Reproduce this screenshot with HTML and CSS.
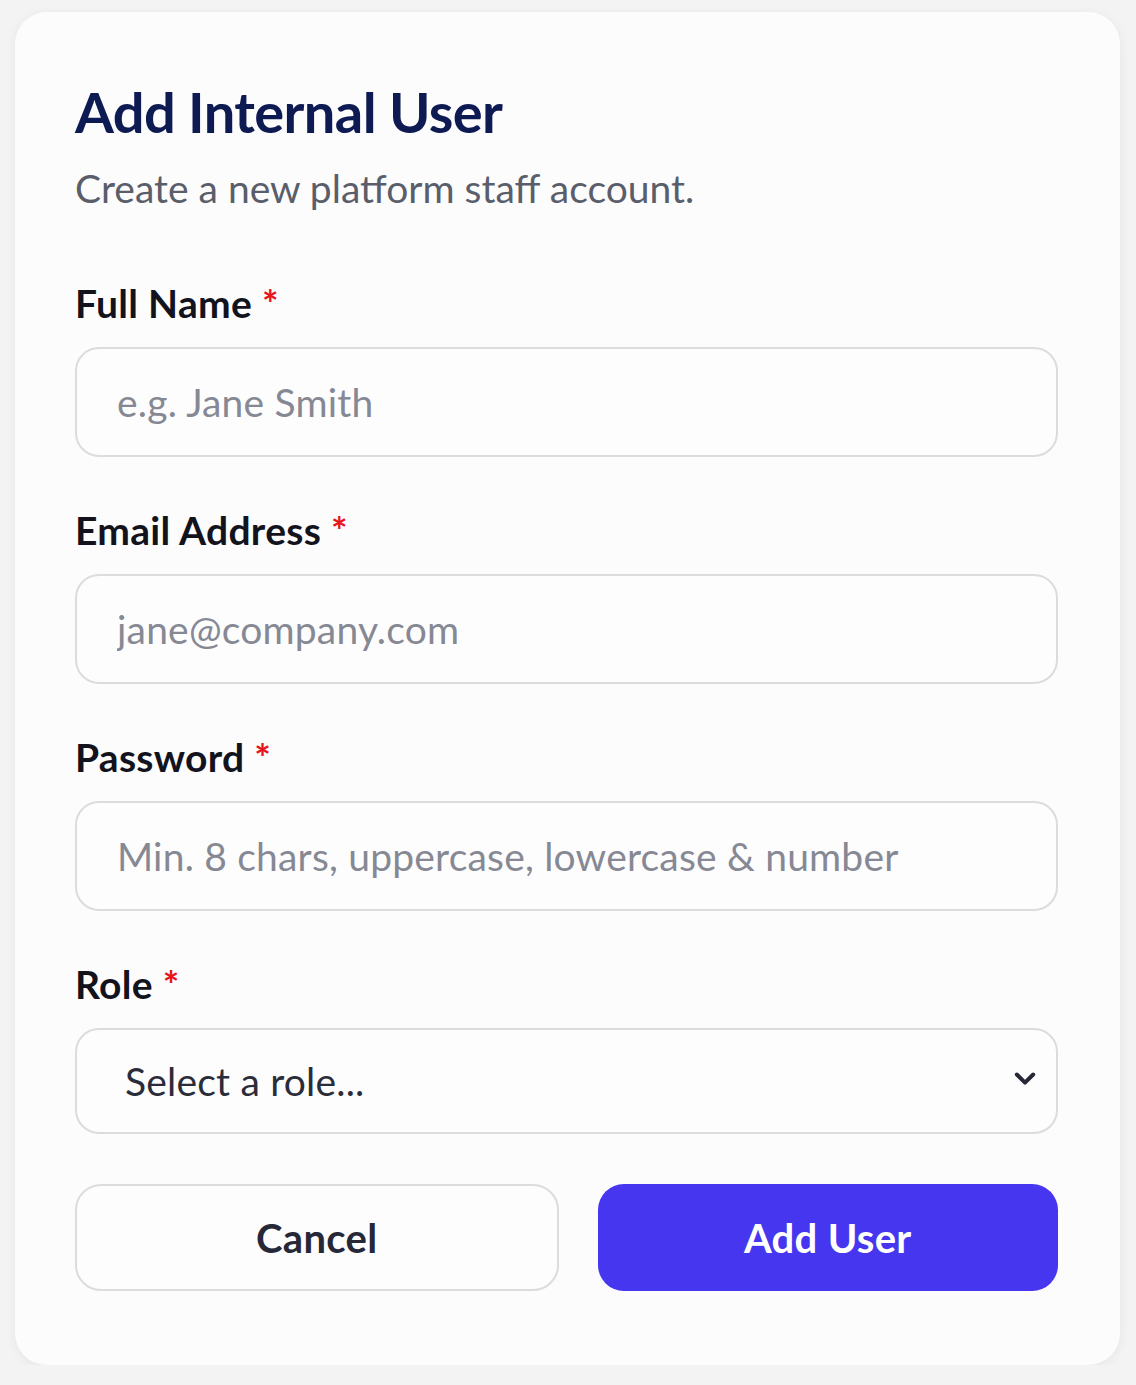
FILE: index.html
```html
<!DOCTYPE html>
<html lang="en">
<head>
  <meta charset="UTF-8">
  <meta name="viewport" content="width=device-width, initial-scale=1.0">
  <title>Add Internal User</title>
  <link rel="stylesheet" href="styles.css">
</head>
<body>

<div class="modal">
  <h1 class="modal-title">Add Internal User</h1>
  <p class="modal-subtitle">Create a new platform staff account.</p>

  <form class="user-form" onsubmit="return false">
    <!-- Full name -->
    <div class="field">
      <label class="field-label" for="fullName">Full Name <span class="required">*</span></label>
      <input class="field-input" id="fullName" type="text" placeholder="e.g. Jane Smith">
    </div>

    <!-- Email -->
    <div class="field">
      <label class="field-label" for="email">Email Address <span class="required">*</span></label>
      <input class="field-input" id="email" type="email" placeholder="jane@company.com">
    </div>

    <!-- Password -->
    <div class="field">
      <label class="field-label" for="password">Password <span class="required">*</span></label>
      <input class="field-input" id="password" type="password" placeholder="Min. 8 chars, uppercase, lowercase &amp; number">
    </div>

    <!-- Role -->
    <div class="field">
      <label class="field-label" for="role">Role <span class="required">*</span></label>
      <div class="select-wrap">
        <select class="field-input field-select" id="role">
          <option value="">Select a role...</option>
          <option value="admin">Admin</option>
          <option value="support">Support</option>
        </select>
        <svg class="select-arrow" viewBox="0 0 24 24" width="28" height="28" fill="none" stroke="#262838" stroke-width="3.4" stroke-linecap="round" stroke-linejoin="round">
          <path d="M5 9l7 7 7-7"/>
        </svg>
      </div>
    </div>

    <div class="actions">
      <button class="btn btn-cancel" type="button">Cancel</button>
      <button class="btn btn-primary" type="submit">Add User</button>
    </div>
  </form>
</div>

</body>
</html>
```

FILE: styles.css
```css
/* Base */
body {
  margin: 0;
  background: #f3f3f4;
  font-family: 'Lato', 'Inter', 'Liberation Sans', sans-serif;
}

/* Modal card */
.modal {
  margin: 12px 16px 0 15px;
  height: 1353px;
  box-sizing: border-box;
  background: #fcfcfd;
  border-radius: 32px;
  padding: 67px 62px 0 60px;
  box-shadow: 0 2px 12px rgba(0, 0, 0, 0.06);
}

.modal-title {
  margin: 0;
  font-size: 56px;
  line-height: 66px;
  font-weight: 700;
  color: #0e1b52;
  letter-spacing: -0.6px;
}

.modal-subtitle {
  margin: 20px 0 0;
  font-size: 39px;
  line-height: 46px;
  color: #5a5e6b;
}

/* Form */
.user-form {
  margin-top: 69px;
}

.field {
  margin-bottom: 50px;
}

.field-label {
  display: block;
  font-size: 39px;
  line-height: 46px;
  font-weight: 700;
  color: #12131c;
  margin-bottom: 21px;
  letter-spacing: 0.3px;
}

.required {
  color: #e8141c;
}

.field-input {
  display: block;
  width: 100%;
  height: 110px;
  box-sizing: border-box;
  border: 2px solid #dcdcdf;
  border-radius: 24px;
  background: #fdfdfe;
  padding: 0 40px;
  font-family: inherit;
  font-size: 39px;
  letter-spacing: 0.2px;
  color: #2a2c3a;
  outline: none;
}

.field-input::placeholder {
  color: #868994;
}

/* Select */
.select-wrap {
  position: relative;
}

.field-select {
  appearance: none;
  -webkit-appearance: none;
  height: 106px;
  padding-left: 48px;
  color: #2a2c3a;
}

.select-arrow {
  position: absolute;
  right: 19px;
  top: 36px;
  pointer-events: none;
}

/* Buttons */
.actions {
  display: grid;
  grid-template-columns: 483fr 460fr;
  gap: 39px;
  margin-top: 1px;
}

.btn {
  height: 107px;
  border-radius: 26px;
  font-family: inherit;
  font-size: 40px;
  font-weight: 700;
  letter-spacing: 0.3px;
  cursor: pointer;
}

.btn-cancel {
  background: #fdfdfe;
  border: 2px solid #dcdcdf;
  color: #262838;
}

.btn-primary {
  background: #4636f0;
  border: none;
  color: #fff;
}
```
